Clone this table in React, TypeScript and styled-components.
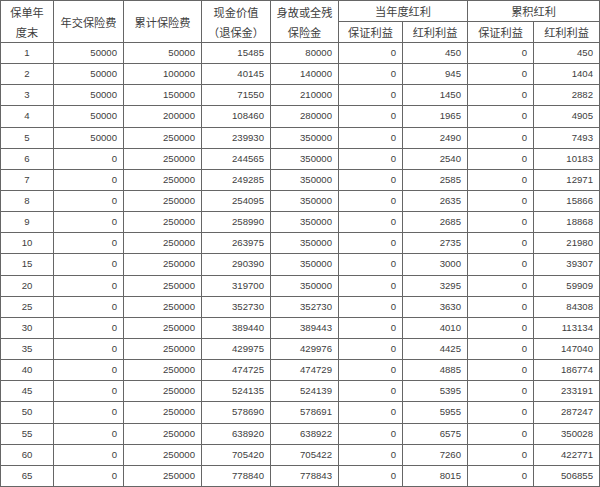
import React from 'react';
import styled, { createGlobalStyle } from 'styled-components';

const GlobalStyle = createGlobalStyle`
    html, body {
        margin: 0;
        padding: 0;
        background: #ffffff;
    }
`;

const Page = styled.div`
    width: 600px;
    height: 487px;
    overflow: hidden;
    background: #ffffff;
`;

const Table = styled.table`
    width: 599px;
    table-layout: fixed;
    border-collapse: collapse;
    color: #404040;
`;

const HeadCell = styled.th<{ tall?: boolean }>`
    border: 1px solid #666666;
    height: ${({ tall }) => (tall ? '41px' : '20px')};
    padding: 0;
    font-family: "Noto Sans CJK SC", "Noto Sans", sans-serif;
    font-weight: 400;
    font-size: 11.2px;
    line-height: 20px;
    text-align: center;
    vertical-align: middle;
    white-space: nowrap;
`;

const Cell = styled.td<{ center?: boolean }>`
    border: 1px solid #666666;
    height: 20.15px;
    padding: 0 ${({ center }) => (center ? '0' : '6px')} 0 0;
    font-family: "Liberation Sans", "Noto Sans", sans-serif;
    font-size: 9.6px;
    line-height: 20px;
    text-align: ${({ center }) => (center ? 'center' : 'right')};
    vertical-align: middle;
    white-space: nowrap;
`;

const colWidths = [53, 70, 78, 69, 68, 64, 65, 66, 66];

const rows: number[][] = [
    [1, 50000, 50000, 15485, 80000, 0, 450, 0, 450],
    [2, 50000, 100000, 40145, 140000, 0, 945, 0, 1404],
    [3, 50000, 150000, 71550, 210000, 0, 1450, 0, 2882],
    [4, 50000, 200000, 108460, 280000, 0, 1965, 0, 4905],
    [5, 50000, 250000, 239930, 350000, 0, 2490, 0, 7493],
    [6, 0, 250000, 244565, 350000, 0, 2540, 0, 10183],
    [7, 0, 250000, 249285, 350000, 0, 2585, 0, 12971],
    [8, 0, 250000, 254095, 350000, 0, 2635, 0, 15866],
    [9, 0, 250000, 258990, 350000, 0, 2685, 0, 18868],
    [10, 0, 250000, 263975, 350000, 0, 2735, 0, 21980],
    [15, 0, 250000, 290390, 350000, 0, 3000, 0, 39307],
    [20, 0, 250000, 319700, 350000, 0, 3295, 0, 59909],
    [25, 0, 250000, 352730, 352730, 0, 3630, 0, 84308],
    [30, 0, 250000, 389440, 389443, 0, 4010, 0, 113134],
    [35, 0, 250000, 429975, 429976, 0, 4425, 0, 147040],
    [40, 0, 250000, 474725, 474729, 0, 4885, 0, 186774],
    [45, 0, 250000, 524135, 524139, 0, 5395, 0, 233191],
    [50, 0, 250000, 578690, 578691, 0, 5955, 0, 287247],
    [55, 0, 250000, 638920, 638922, 0, 6575, 0, 350028],
    [60, 0, 250000, 705420, 705422, 0, 7260, 0, 422771],
    [65, 0, 250000, 778840, 778843, 0, 8015, 0, 506855],
];

const App = () => {
    return (<Page>
        <GlobalStyle/>
        <Table>
            <colgroup>
                {colWidths.map((w, i) => <col key={i} style={{ width: w }}/>)}
            </colgroup>
            <thead>
                <tr>
                    <HeadCell rowSpan={2} tall>保单年<br/>度末</HeadCell>
                    <HeadCell rowSpan={2} tall>年交保险费</HeadCell>
                    <HeadCell rowSpan={2} tall>累计保险费</HeadCell>
                    <HeadCell rowSpan={2} tall>现金价值<br/>（退保金）</HeadCell>
                    <HeadCell rowSpan={2} tall>身故或全残<br/>保险金</HeadCell>
                    <HeadCell colSpan={2}>当年度红利</HeadCell>
                    <HeadCell colSpan={2}>累积红利</HeadCell>
                </tr>
                <tr>
                    <HeadCell>保证利益</HeadCell>
                    <HeadCell>红利利益</HeadCell>
                    <HeadCell>保证利益</HeadCell>
                    <HeadCell>红利利益</HeadCell>
                </tr>
            </thead>
            <tbody>
                {rows.map((r) => (
                    <tr key={r[0]}>
                        {r.map((v, i) => <Cell key={i} center={i === 0}>{v}</Cell>)}
                    </tr>
                ))}
            </tbody>
        </Table>
    </Page>);
}

export default App;
